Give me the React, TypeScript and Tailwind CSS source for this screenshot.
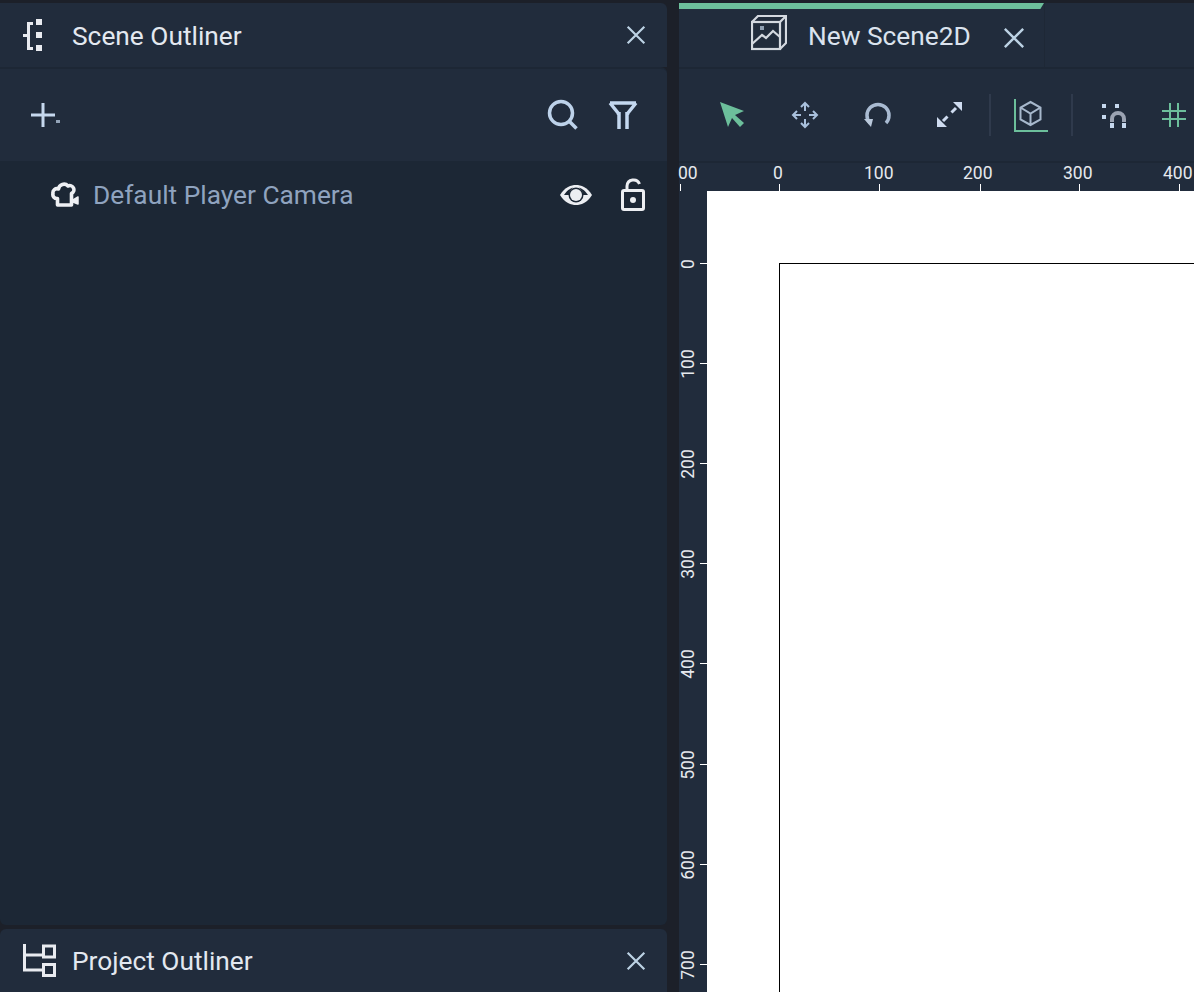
const hTicks = [
  { x: 1, label: "00", lx: -1 },
  { x: 100, label: "0", lx: 94 },
  { x: 200, label: "100", lx: 185 },
  { x: 301, label: "200", lx: 284 },
  { x: 400, label: "300", lx: 384 },
  { x: 500, label: "400", lx: 484 },
];

const vTicks = [
  { y: 263, label: "0" },
  { y: 363, label: "100" },
  { y: 463, label: "200" },
  { y: 563, label: "300" },
  { y: 663, label: "400" },
  { y: 764, label: "500" },
  { y: 864, label: "600" },
  { y: 964, label: "700" },
];

const CloseIcon = ({ size }: { size: number }) => (
  <svg width={size} height={size} viewBox="0 0 24 24" fill="none" stroke="#bcd2e4" strokeWidth="2.600">
    <path d="M2 2l20 20M22 2L2 22" />
  </svg>
);

const SceneOutlinerIcon = () => (
  <svg width="20" height="34" viewBox="0 0 20 34" fill="#e9ebf0">
    <path d="M4 4h6v3H7v22h3v3H4V19H0v-3h4z" />
    <rect x="13" y="1" width="6" height="6" />
    <rect x="13" y="14" width="6" height="6" />
    <rect x="13" y="27" width="6" height="6" />
  </svg>
);

const ProjectOutlinerIcon = () => (
  <svg width="33" height="33" viewBox="0 0 33 33" fill="none" stroke="#e9ebf0" strokeWidth="3">
    <path d="M1.500 0v26h18M1.500 11h18" />
    <rect x="20.500" y="2" width="11" height="11" />
    <rect x="20.500" y="20.500" width="11" height="11" />
  </svg>
);

const CameraIcon = () => (
  <svg width="30" height="26" viewBox="0 0 30 26" fill="none" stroke="#eef0f4" strokeWidth="3.600" strokeLinejoin="round">
    <path d="M3 11.500a4 4 0 0 1 5.500-4.500a5.500 5.500 0 0 1 9.500-3a4 4 0 0 1 3.500 7.500V23H7.500v-6.500A4 4 0 0 1 3 11.500z" />
    <path d="M23 18l5-3v7l-5-2z" fill="#eef0f4" strokeWidth="1.500" />
  </svg>
);

const App = () => {
  return (
    <div className="flex h-[992px] w-[1194px] gap-[12px] overflow-hidden bg-[#1c2029] pt-[3px] font-['Roboto',sans-serif]">
      {/* left column */}
      <div className="flex w-[667px] shrink-0 flex-col">
        <div className="flex h-[64px] items-center rounded-tr-md bg-[#212c3c] pl-[23px] pr-[21px]">
          <SceneOutlinerIcon />
          <span className="ml-[29px] pt-[4px] text-[26.300px] text-[#e3e8f0]">Scene Outliner</span>
          <div className="ml-auto">
            <CloseIcon size={20} />
          </div>
        </div>
        <div className="flex h-[94px] items-center rounded-tr-md border-t-2 border-[#1d2735] bg-[#212c3c] pl-[31px] pr-[29px]">
          <svg width="34" height="26" viewBox="0 0 34 26">
            <path d="M10.500 1h3v24h-3zM0 11.500h24v3H0z" fill="#c6d8ee" />
            <rect x="25" y="18" width="4" height="3" fill="#93a4b8" />
          </svg>
          <svg width="32" height="32" viewBox="0 0 32 32" fill="none" stroke="#bdd2ea" strokeWidth="3.500" className="ml-auto">
            <circle cx="14" cy="14" r="11.500" />
            <path d="M22 22l7.500 7.500" />
          </svg>
          <svg width="30" height="30" viewBox="0 0 30 30" fill="none" stroke="#c4d8f0" strokeWidth="3.500" className="ml-[29px]">
            <path d="M2 3h26M2 3l8.500 10.500v1.500M28 3l-8.500 10.500v1.500M11 12v17M19 12v17" />
          </svg>
        </div>
        <div className="flex h-[764px] flex-col rounded-b-md bg-[#1c2735]">
          <div className="flex h-[68px] items-center pl-[50px] pr-[21px]">
            <CameraIcon />
            <span className="ml-[13px] pt-[2px] text-[26.300px] text-[#8fa3bf]">Default Player Camera</span>
            <svg width="34" height="24" viewBox="0 0 34 24" className="ml-auto">
              <path d="M1 12C6 4 12 2 17 2s11 2 16 10c-5 8-11 10-16 10S6 20 1 12z" fill="#eceef2" />
              <circle cx="17" cy="12" r="7.500" fill="#1c2735" />
              <circle cx="17" cy="12" r="6" fill="#eceef2" />
              <path d="M5 12c4-6 8-7 9-7.500C11 7 10 10 10 12z" fill="#1c2735" />
              <path d="M29 12c-4-6-8-7-9-7.500C23 7 24 10 24 12z" fill="#1c2735" />
            </svg>
            <svg width="26" height="34" viewBox="0 0 26 34" fill="none" stroke="#eceef2" strokeWidth="3" className="mb-[1px] ml-[27px]">
              <path d="M7 12V8a6.500 6.500 0 0 1 12.500-2" />
              <rect x="2.500" y="12.500" width="21" height="19" rx="1.500" />
              <circle cx="13" cy="22" r="3" fill="#eceef2" stroke="none" />
            </svg>
          </div>
        </div>
        <div className="mt-[4px] flex h-[63px] items-center rounded-t-md bg-[#212c3c] pl-[23px] pr-[21px]">
          <ProjectOutlinerIcon />
          <span className="ml-[16px] pt-[2px] text-[26.300px] text-[#e3e8f0]">Project Outliner</span>
          <div className="ml-auto">
            <CloseIcon size={20} />
          </div>
        </div>
      </div>

      {/* right column */}
      <div className="flex min-w-0 flex-1 flex-col">
        <div className="flex h-[64px] bg-[#212c3c]">
          <div className="w-[366px] shrink-0 border-r border-[#1e2836]">
            <div className="h-[6px] bg-[#6cbf9b] [clip-path:polygon(0_0,100%_0,99%_100%,0_100%)]" />
            <div className="flex h-[58px] items-center pb-[3px] pl-[72px]">
              <svg width="36" height="36" viewBox="0 0 36 36" fill="none" stroke="#d4d9e0" strokeWidth="2.200" className="mb-[7px]">
                <rect x="1" y="7" width="28" height="27" />
                <path d="M1 7l6-6h28v27l-6 6M29 7l6-6" />
                <path d="M1 29l10-9 4 3 7-7 7 6" />
                <rect x="9" y="11" width="4" height="4" fill="#8f9fb2" stroke="none" />
              </svg>
              <span className="ml-[21px] text-[26.300px] text-[#dbe3ee]">New Scene2D</span>
              <div className="ml-[32px] mt-[3px]">
                <CloseIcon size={22} />
              </div>
            </div>
          </div>
        </div>
        <div className="flex h-[94px] items-center border-t-2 border-[#1d2735] bg-[#212c3c] pl-[40px]">
          <svg width="28" height="28" viewBox="0 0 28 28" fill="#6cbf9b">
            <path d="M1 1l24 9-9 4 9 8-4 4-8-9-4 9z" />
          </svg>
          <svg width="28" height="28" viewBox="0 0 28 28" fill="none" stroke="#a9c1dd" strokeWidth="2" className="ml-[44px]">
            <path d="M14 2v8M14 18v8M2 14h8M18 14h8M10 6l4-4 4 4M10 22l4 4 4-4M6 10l-4 4 4 4M22 10l4 4-4 4" />
          </svg>
          <svg width="28" height="28" viewBox="0 0 28 28" className="ml-[45px]">
            <path d="M6 22A11 11 0 1 1 22 22" fill="none" stroke="#a9bbd2" strokeWidth="3.500" />
            <path d="M0 18h9l-2 8z" fill="#b9c8db" />
          </svg>
          <svg width="28" height="28" viewBox="0 0 28 28" className="ml-[44px]">
            <path d="M26 1v9l-9-9zM1 26v-10l10 10z" fill="#cfdcf0" />
            <path d="M20 7l-4.500 4.500M7 20l4.500-4.500" stroke="#cfdcf0" strokeWidth="3" />
          </svg>
          <div className="ml-[25px] h-[42px] w-[2px] bg-[#2f3a4c]" />
          <svg width="38" height="36" viewBox="0 0 38 36" fill="none" className="ml-[21px]">
            <path d="M3 2v32h33" stroke="#6cbf9b" strokeWidth="2" />
            <path d="M18.500 5l10 5.500v12L18.500 28l-10-5.500v-12zM8.500 10.500l10 6 10-6M18.500 16.500V28" stroke="#a7b8cc" strokeWidth="2" />
          </svg>
          <div className="ml-[21px] h-[42px] w-[2px] bg-[#2f3a4c]" />
          <svg width="28" height="28" viewBox="0 0 28 28" className="ml-[29px]">
            <path d="M0 3h4v4H0zM13 3h4v4h-4zM0 14h4v4H0z" fill="#c6d8ee" />
            <path d="M8 26V18a7 7 0 0 1 16 0v3h-4v-3a3 3 0 0 0-8 0v3H8z" fill="#9ba3b2" />
            <path d="M8 22h4v5H8zM20 22h4v5h-4z" fill="#c6d8ee" />
          </svg>
          <svg width="24" height="24" viewBox="0 0 24 24" fill="none" stroke="#6cbf9b" strokeWidth="2" className="ml-[32px]">
            <path d="M8 0v24M16 0v24M0 8h24M0 16h24" />
          </svg>
        </div>

        {/* ruler + canvas */}
        <div className="relative min-h-0 flex-1 border-t-2 border-[#1d2735] bg-[#212c3c]">
          {hTicks.map((t) => (
            <div key={t.label}>
              <span className="absolute top-[-1px] text-[17.500px] leading-[22px] text-[#e6e9ee]" style={{ left: t.lx }}>{t.label}</span>
              <div className="absolute top-[21px] h-[7px] w-px bg-white" style={{ left: t.x }} />
            </div>
          ))}
          {vTicks.map((t) => (
            <div key={t.label}>
              <span
                className="absolute left-[-1px] flex h-[20px] w-[20px] origin-center -rotate-90 items-center justify-center whitespace-nowrap text-[17.500px] leading-[20px] text-[#e6e9ee]"
                style={{ top: t.y - 163 - 9 }}
              >
                {t.label}
              </span>
              <div className="absolute left-[21px] h-px w-[7px] bg-white" style={{ top: t.y - 163 }} />
            </div>
          ))}
          <div className="absolute bottom-0 left-[28px] right-0 top-[28px] bg-white">
            <div className="absolute bottom-[-2px] left-[72px] right-[-2px] top-[72px] border border-black" />
          </div>
        </div>
      </div>
    </div>
  );
};

export default App;
